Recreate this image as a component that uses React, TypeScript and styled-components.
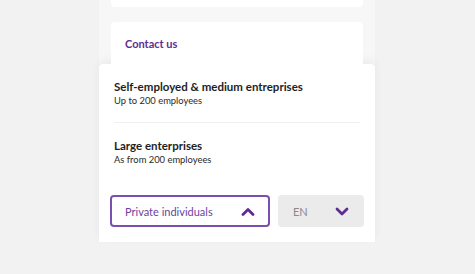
import React from 'react'
import styled, { createGlobalStyle } from 'styled-components'

const Global = createGlobalStyle`
  body {
    margin: 0;
    background: #f2f2f2;
    font-family: Lato, "Noto Sans", sans-serif;
  }
`

const Page = styled.div`
  width: 475px;
  height: 274px;
  overflow: hidden;
  background: #f2f2f2;
`

const Column = styled.div`
  margin-left: 99px;
  width: 276px;
  box-sizing: border-box;
  padding: 0 12px;
  background: #f7f7f7;
  display: flex;
  flex-direction: column;
  gap: 15px;
`

const Card = styled.div<{ $h: number; $top?: boolean }>`
  height: ${(p) => p.$h}px;
  background: #fff;
  border-radius: ${(p) => (p.$top ? '4px 4px 0 0' : '0 0 4px 4px')};
  box-sizing: border-box;
  padding: ${(p) => (p.$top ? '15px 14px 0' : '0')};
`

const ContactLink = styled.div`
  color: #5f2d91;
  font-weight: 700;
  font-size: 11px;
  line-height: 13px;
`

const Sheet = styled.div`
  margin-left: 99px;
  width: 276px;
  height: 178px;
  box-sizing: border-box;
  background: #fff;
  border-radius: 4px 4px 0 0;
  box-shadow: 0 -4px 10px rgba(0, 0, 0, 0.05);
  padding: 16px 15px 0;
`

const Option = styled.div<{ $divider?: boolean }>`
  padding: 0 0 ${(p) => (p.$divider ? '14px' : '0')};
  margin-bottom: ${(p) => (p.$divider ? '16px' : '0')};
  border-bottom: ${(p) => (p.$divider ? '1px solid #efefef' : 'none')};
`

const OptionTitle = styled.div`
  font-size: 11.5px;
  font-weight: 700;
  color: #1e1e1e;
  line-height: 14px;
`

const OptionSub = styled.div`
  font-size: 9.4px;
  color: #2a2a2a;
  line-height: 14px;
`

const Controls = styled.div`
  display: flex;
  gap: 8px;
  margin: 28px -11px 0 -4px;
`

const Select = styled.button<{ $open?: boolean; $w: number }>`
  flex: 0 0 ${(p) => p.$w}px;
  height: 32px;
  box-sizing: border-box;
  display: flex;
  align-items: center;
  justify-content: space-between;
  padding: 0 13px 0 13px;
  border-radius: 4px;
  font-family: inherit;
  font-size: 11px;
  border: ${(p) => (p.$open ? '2px solid #7a4fb0' : '2px solid #ebebeb')};
  background: ${(p) => (p.$open ? '#fff' : '#ebebeb')};
  color: ${(p) => (p.$open ? '#6b3fa0' : '#8a8a8a')};
`

const Chevron = ({ up }: { up?: boolean }) => (
  <svg width="14" height="9" viewBox="0 0 14 9">
    <path
      d={up ? 'M2 7.5 L7 2.5 L12 7.5' : 'M2 2 L7 7 L12 2'}
      fill="none"
      stroke="#5f2d91"
      strokeWidth="2.8"
      strokeLinecap="round"
      strokeLinejoin="round"
    />
  </svg>
)

export default function App() {
  return (
    <Page>
      <Global />
      <Column>
        <Card $h={7} />
        <Card $h={42} $top>
          <ContactLink>Contact us</ContactLink>
        </Card>
      </Column>
      <Sheet>
        <Option $divider>
          <OptionTitle>Self-employed &amp; medium entreprises</OptionTitle>
          <OptionSub>Up to 200 employees</OptionSub>
        </Option>
        <Option>
          <OptionTitle>Large enterprises</OptionTitle>
          <OptionSub>As from 200 employees</OptionSub>
        </Option>
        <Controls>
          <Select $open $w={160}>
            Private individuals
            <Chevron up />
          </Select>
          <Select $w={86}>
            EN
            <Chevron />
          </Select>
        </Controls>
      </Sheet>
    </Page>
  )
}
